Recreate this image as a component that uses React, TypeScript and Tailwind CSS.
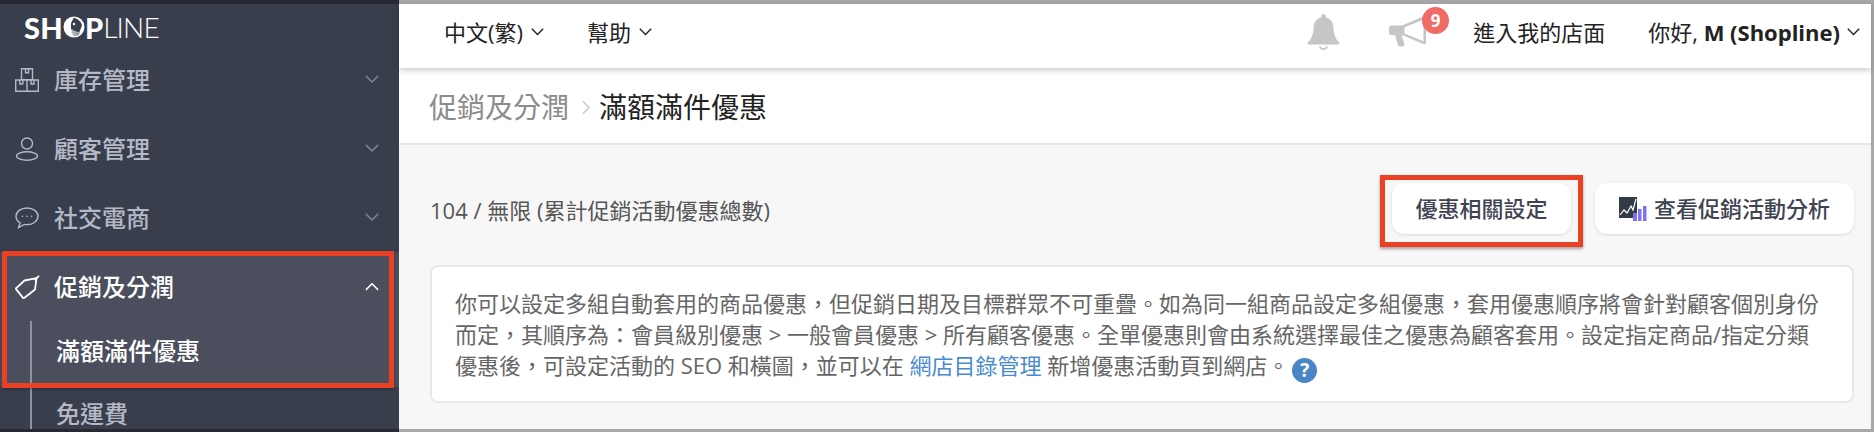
import React from 'react';

const CJK = { fontFamily: '"Open Sans", "Noto Sans CJK TC", sans-serif' };

const Chevron: React.FC<{ up?: boolean; className?: string }> = ({ up, className }) => (
  <svg viewBox="0 0 16 10" fill="none" stroke="currentColor" strokeWidth={1.7} className={className}>
    <path d={up ? 'M1 9l7-7 7 7' : 'M1 1l7 7 7-7'} />
  </svg>
);

const BoxIcon = () => (
  <svg viewBox="0 0 24 24" fill="none" stroke="currentColor" strokeWidth={1.4} className="w-6 h-6">
    <path d="M6.5.7h11v11h-11zM.7 12h11.3v11.3H.7zM12 12h11.3v11.3H12zM10.5.7v4h3v-4M4.8 12v4h3v-4M16 12v4h3v-4" />
  </svg>
);

const PersonIcon = () => (
  <svg viewBox="0 0 24 24" fill="none" stroke="currentColor" strokeWidth={1.4} className="w-6 h-6">
    <circle cx="12" cy="6.5" r="5.5" />
    <ellipse cx="12" cy="19" rx="10.5" ry="4.2" />
  </svg>
);

const ChatIcon = () => (
  <svg viewBox="0 0 24 22" fill="none" stroke="currentColor" strokeWidth={1.4} className="w-6 h-[22px]">
    <path d="M12 1C5.8 1 1 4.6 1 9.3c0 2.7 1.6 5 4.1 6.5L3.6 20.6l5.6-3.2c.9.2 1.8.2 2.8.2 6.2 0 11-3.6 11-8.3S18.200 1 12 1z" />
    <circle cx="7.500" cy="9.300" r=".8" fill="currentColor" stroke="none" />
    <circle cx="12" cy="9.300" r=".8" fill="currentColor" stroke="none" />
    <circle cx="16.500" cy="9.300" r=".8" fill="currentColor" stroke="none" />
  </svg>
);

const TagIcon = () => (
  <svg viewBox="0 0 25 24" fill="none" stroke="currentColor" strokeWidth={1.8} strokeLinejoin="round" className="w-[25px] h-6">
    <path d="M9.500 5.500L21.500 3.200 20 14.500 9.500 22.800c-.6.400-1.300.3-1.700-.2L1.300 14.400c-.4-.5-.3-1.200.2-1.600z" />
    <path d="M19.500 5.200L24 .8" />
  </svg>
);

const BellIcon = () => (
  <svg viewBox="0 0 33 36" className="w-[33px] h-9" fill="#c6c6c6">
    <path d="M16.500 0c1.400 0 2.300 1 2.300 2.300v1.200c4.800 1.100 7.400 5 7.600 10 .2 6.500 1.900 11 5.800 15 .7.700.3 2-.8 2H1.600c-1.100 0-1.500-1.300-.8-2 3.900-4 5.600-8.500 5.800-15 .2-5 2.800-8.900 7.600-10V2.300C14.200 1 15.100 0 16.500 0z" />
    <path d="M12 32.500c.5 2.100 2.300 3.500 4.500 3.500s4-1.400 4.500-3.500h-2c-.4 1-1.400 1.700-2.500 1.700s-2.100-.7-2.500-1.700z" />
  </svg>
);

const MegaphoneIcon = () => (
  <svg viewBox="0 0 37 33" className="w-[37px] h-[33px]" fill="#c6c6c6">
    <path d="M2.500 9.500h10.500v9.500H2.500C1 19 0 18 0 16.500v-4.500C0 10.500 1 9.500 2.500 9.500z" />
    <path d="M6 19h6.500l2.800 8.600c.5 1.500-.5 3-2.100 3h-2.200c-1 0-1.800-.6-2.100-1.500z" />
    <path fillRule="evenodd" d="M13 9.500L35.500 0 37 .8v27l-1.500.8L13 19zM15.500 11.200v6.200l19 7.800V3.800z" />
  </svg>
);

const ChartIcon = () => (
  <svg viewBox="0 0 28 24" className="w-7 h-6">
    <rect x="0" y="0" width="18" height="21" fill="#333b46" />
    <path d="M1 18l4-5 3 3 4-7 2 4 3-11" fill="none" stroke="#fff" strokeWidth={1.2} />
    <rect x="14" y="16" width="4" height="8" fill="#8072f5" />
    <rect x="19" y="12" width="3.500" height="12" fill="#8072f5" />
    <rect x="24" y="9" width="3.500" height="15" fill="#8072f5" />
  </svg>
);

const LogoO = () => (
  <svg viewBox="0 0 22 22" className="w-[22px] h-[22px]">
    <circle cx="11" cy="11" r="10.500" fill="#fff" />
    <path d="M11 1.500C15 3 18.500 6 19 9.500L15 19.500 8 13 8 7z" fill="#393e4d" />
    <path d="M9 13l6 6.500-4 1-2.500-4z M9.500 14l8 3 -2 2z" fill="#aeb2bc" />
    <circle cx="11" cy="8" r="1.200" fill="#fff" />
  </svg>
);

const items = [
  { label: '庫存管理', icon: <BoxIcon /> },
  { label: '顧客管理', icon: <PersonIcon /> },
  { label: '社交電商', icon: <ChatIcon /> },
];

const Sidebar = () => (
  <aside className="w-[399px] shrink-0 h-full bg-[#393e4d] border-t-4 border-b-[3px] border-[#272a35] overflow-hidden text-[#b4b9c6] text-[24px]" style={CJK}>
    <div className="h-[41px] pl-6 pt-[5px] flex items-center text-white leading-none" style={{ fontFamily: 'Lato, sans-serif' }}>
      <span className="text-[29px] font-black tracking-[0.3px]">SH</span>
      <LogoO />
      <span className="text-[29px] font-black">P</span>
      <span className="text-[28px] font-light tracking-[-0.8px]">LINE</span>
    </div>
    {items.map((it) => (
      <div key={it.label} className="h-[69px] flex items-center pl-[15px] pr-5">
        <span className="w-[39px] flex">{it.icon}</span>
        <span className="flex-1 leading-none font-medium">{it.label}</span>
        <Chevron className="w-[14px] text-[#7d8392]" />
      </div>
    ))}
    <div className="bg-[#4a4e5d] h-[135px]">
      <div className="h-[69px] flex items-center pl-[15px] pr-5 text-white">
        <span className="w-[39px] flex"><TagIcon /></span>
        <span className="flex-1 leading-none font-medium">促銷及分潤</span>
        <Chevron up className="w-[14px]" />
      </div>
      <div className="ml-[30px] border-l-2 border-[#8f93a1] h-[66px] pl-[24px] pt-[10px] text-white font-medium leading-[40px]">滿額滿件優惠</div>
    </div>
    <div className="ml-[30px] border-l-2 border-[#8f93a1] h-[60px] pl-[24px] pt-[7px] font-medium leading-[40px]">免運費</div>
  </aside>
);

const Header = () => (
  <header className="relative z-10 h-16 shrink-0 bg-white shadow-[0_2px_6px_rgba(0,0,0,0.22)] flex items-center text-[22px] text-[#222] pl-[45px] pb-2">
    <span>中文(繁)</span>
    <Chevron className="w-[13px] ml-2" />
    <span className="ml-[43px]">幫助</span>
    <Chevron className="w-[13px] ml-2" />
    <div className="flex-1" />
    <BellIcon />
    <div className="relative ml-[49px] mr-[47px]">
      <MegaphoneIcon />
      <span className="absolute -top-[9px] left-[33px] w-[27px] h-[27px] rounded-full bg-[#f06a66] text-white text-[17px] font-bold leading-[27px] text-center">9</span>
    </div>
    <span>進入我的店面</span>
    <span className="ml-[43px]">你好, <b>M (Shopline)</b></span>
    <Chevron className="w-[13px] ml-[7px] mr-[11px]" />
  </header>
);

const Breadcrumb = () => (
  <div className="h-[77px] shrink-0 bg-white border-b-2 border-[#e6e6e6] flex items-center pl-[30px] pt-[3px] text-[28px] leading-none">
    <span className="text-[#8c8c8c]">促銷及分潤</span>
    <svg viewBox="0 0 10 16" fill="none" stroke="#c3c7d4" strokeWidth={1.5} className="w-[9px] h-[15px] ml-[13px] mr-2">
      <path d="M1 1l7 7-7 7" />
    </svg>
    <span className="text-[#222]">滿額滿件優惠</span>
  </div>
);

const Content = () => (
  <div className="flex-1 bg-[#f7f7f7] pl-[31px] pr-[17px] pt-[38px]">
    <div className="flex items-center h-[51px]">
      <span className="flex-1 text-[22px] text-[#555] pt-1">104 / 無限 (累計促銷活動優惠總數)</span>
      <button className="w-[179px] h-[51px] rounded-xl bg-white shadow-[0_1px_3px_rgba(0,0,0,0.12)] text-[22px] font-medium text-[#3f4452]">優惠相關設定</button>
      <button className="ml-6 w-[259px] h-[51px] rounded-xl bg-white shadow-[0_1px_3px_rgba(0,0,0,0.12)] text-[22px] font-medium text-[#3f4452] flex items-center justify-center gap-[7px]">
        <ChartIcon />
        查看促銷活動分析
      </button>
    </div>
    <div className="mt-[31px] h-[138px] bg-white border-2 border-[#e8e8e8] rounded-lg pl-[23px] pt-[21px] text-[22px] leading-[31px] text-[#666]">
      <p className="w-[1370px]">
        你可以設定多組自動套用的商品優惠，但促銷日期及目標群眾不可重疊。如為同一組商品設定多組優惠，套用優惠順序將會針對顧客個別身份而定，其順序為：會員級別優惠 &gt; 一般會員優惠 &gt; 所有顧客優惠。全單優惠則會由系統選擇最佳之優惠為顧客套用。設定指定商品/指定分類優惠後，可設定活動的 SEO 和橫圖，並可以在 <a className="text-[#4a8bd0]">網店目錄管理</a> 新增優惠活動頁到網店。
        <span className="inline-block ml-[3px] w-[25px] h-[25px] rounded-full bg-[#4a86c5] text-white text-[19px] font-bold leading-[25px] text-center align-[-3px]">?</span>
      </p>
    </div>
  </div>
);

export default function App() {
  return (
    <div className="relative w-[1874px] h-[432px] flex overflow-hidden bg-white" style={CJK}>
      <Sidebar />
      <main className="flex-1 min-w-0 h-full flex flex-col border-t-4 border-b-[3px] border-r-[3px] border-[#a8a8a8]">
        <Header />
        <Breadcrumb />
        <Content />
      </main>
      {/* annotation boxes drawn over the screenshot */}
      <div className="absolute left-[2px] top-[251px] w-[392px] h-[137px] border-[5px] border-[#ea4023] shadow-[0_1px_3px_rgba(0,0,0,0.35)]" />
      <div className="absolute left-[1380px] top-[175px] w-[203px] h-[72px] border-[5px] border-[#ea4023] shadow-[0_2px_3px_rgba(0,0,0,0.35)]" />
    </div>
  );
}
